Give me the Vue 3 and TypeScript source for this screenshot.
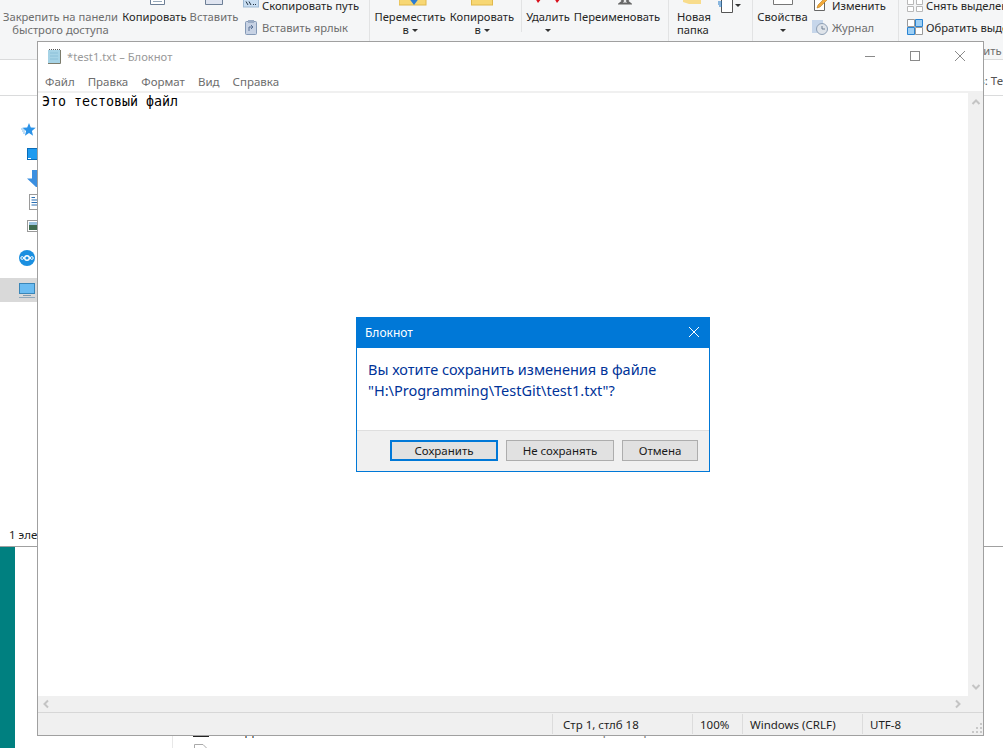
<script setup lang="ts">
const menu = ['Файл', 'Правка', 'Формат', 'Вид', 'Справка'];
const cells = [
  { text: 'Стр 1, стлб 18', width: 140 },
  { text: '100%', width: 50 },
  { text: 'Windows (CRLF)', width: 120 },
  { text: 'UTF-8', width: 121 },
];
</script>

<template>
  <div class="desktop">
    <div class="explorer">
      <div class="ribbon">
        <div class="group g1">
          <div class="big w-pin">
            <span class="ico"></span>
            <span>Закрепить на панели</span>
            <span>быстрого доступа</span>
          </div>
          <div class="big w-copy dark">
            <svg class="ico i-copy" width="17" height="9"><path d="M1.5 -3V4.5H15.5V-3" fill="#fff" stroke="#6d7f96"/><path d="M4 1.5H13" stroke="#9ab"/></svg>
            <span>Копировать</span>
          </div>
          <div class="big w-paste">
            <svg class="ico" width="20" height="9"><path d="M1.5 -3V4.5H18.5V-3" fill="#dfe4f0" stroke="#6d7f96"/></svg>
            <span>Вставить</span>
          </div>
          <div class="small-col first-small">
            <div class="small dark">
              <svg width="16" height="14"><rect x="0.5" y="1" width="15" height="8" fill="#c9def2" stroke="#9db9d4"/><path d="M3 3.5L5 7M6 3.5L8 7M10 6.5h1M12 6.5h1" stroke="#234" fill="none"/></svg>
              <span>Скопировать путь</span>
            </div>
            <div class="small">
              <svg width="16" height="16"><rect x="2.5" y="2.5" width="11" height="13" rx="1" fill="#c7d2e4" stroke="#8499b6"/><rect x="5" y="1" width="6" height="3" fill="#9aabc4"/><path d="M6 12V8H10M8 6l2 2-2 2" fill="none" stroke="#5b7396"/></svg>
              <span>Вставить ярлык</span>
            </div>
          </div>
        </div>

        <div class="group g2">
          <div class="big w-move dark">
            <svg class="ico i-move" width="28" height="9"><rect x="0" y="-4" width="27" height="9" fill="#f7d774" stroke="#e0b84c"/><path d="M9 -3H21L15 5Z" fill="#2b7cd3"/></svg>
            <span>Переместить</span>
            <span>в <i class="caret"></i></span>
          </div>
          <div class="big w-copyto dark">
            <svg class="ico" width="22" height="9"><rect x="0.5" y="-4" width="21" height="9" fill="#f7d774" stroke="#e0b84c"/></svg>
            <span>Копировать</span>
            <span>в <i class="caret"></i></span>
          </div>
          <div class="sep"></div>
          <div class="big w-del dark">
            <svg class="ico" width="30" height="9"><path d="M2 -2L5 3L9 -2ZM21 -2L24 3L28 -2Z" fill="#d8101c"/></svg>
            <span>Удалить</span>
            <span><i class="caret"></i></span>
          </div>
          <div class="big w-ren dark">
            <svg class="ico i-ren" width="14" height="9"><path d="M2 -2L5 1L2 3.5H12L9 1L12 -2" fill="none" stroke="#666" stroke-width="2"/></svg>
            <span>Переименовать</span>
          </div>
        </div>

        <div class="group g3 dark">
          <div class="big w-new">
            <svg class="ico i-new" width="22" height="9"><path d="M2 -3H20V4H8L2 2Z" fill="#f8dc8c"/></svg>
            <span>Новая</span>
            <span>папка</span>
          </div>
          <div class="new-item">
            <svg width="20" height="14"><path d="M7.5 -1V12.5H18.5V-1" fill="#fff" stroke="#555"/><path d="M4 2H8M4 4H8M5 6H8" stroke="#1e78c8"/></svg>
            <i class="caret"></i>
          </div>
        </div>

        <div class="group g4">
          <div class="big w-prop dark">
            <svg class="ico" width="22" height="9"><path d="M1.5 -3V4.5H20.5V-3" fill="#fff" stroke="#777"/></svg>
            <span>Свойства</span>
            <span><i class="caret"></i></span>
          </div>
          <div class="small-col">
            <div class="small dark">
              <svg width="17" height="14"><path d="M2.5 1V12.5H12.5V4" fill="#fff" stroke="#666"/><path d="M5 10L6 7L13 0L15 2L8 9Z" fill="#f2a93b" stroke="#b87a18" stroke-width="0.6"/></svg>
              <span>Изменить</span>
            </div>
            <div class="small">
              <svg width="17" height="16"><rect x="0" y="1" width="11" height="13" fill="#c6d6ea"/><circle cx="10" cy="10" r="5.5" fill="#dfe4ea" stroke="#8ea0b6"/><path d="M10 7V10H13" fill="none" stroke="#6f7f92"/></svg>
              <span>Журнал</span>
            </div>
          </div>
        </div>

        <div class="group g5">
          <div class="small-col">
            <div class="small dark">
              <svg width="16" height="14"><path d="M.5 1.5h6v5h-6zM9.5 1.5h6v5h-6zM.5 8.5h6v5h-6zM9.5 8.5h6v5h-6z" fill="#fff" stroke="#b8b8b8"/></svg>
              <span>Снять выделение</span>
            </div>
            <div class="small dark">
              <svg width="16" height="16"><path d="M.5 .5h7v7h-7zM8.5 8.5h7v7h-7z" fill="#fff" stroke="#9a9a9a"/><path d="M8.5 .5h7v7h-7zM.5 8.5h7v7h-7z" fill="#9fd0f5" stroke="#2a84d2"/></svg>
              <span>Обратить выделение</span>
            </div>
            <div class="caption">Выделить</div>
          </div>
        </div>
      </div>

      <div class="address">
        <svg class="back" width="14" height="12"><path d="M6 1L1.5 6L6 11M2 6H13" fill="none" stroke="#7c7c7c" stroke-width="2"/></svg>
        <span class="search">Поиск в: Тест</span>
      </div>

      <div class="nav">
        <div class="nav-row">
          <svg width="19" height="24"><path d="M10 5L11.8 9.6L16.7 9.8L12.9 13L14.1 17.7L10 15L5.9 17.7L7.1 13L3.3 9.8L8.2 9.6Z" fill="#2b93e8"/><path d="M2 11H5M3 13H6M4 15H6" stroke="#7cbcf0"/></svg>
        </div>
        <div class="nav-row">
          <svg width="19" height="24"><rect x="8.5" y="6.5" width="12" height="11" fill="#1e9bf0" stroke="#0a6cb8"/><path d="M9 16.5h3" stroke="#fff"/></svg>
        </div>
        <div class="nav-row">
          <svg width="19" height="24"><path d="M13 4H20V21H17L8 12.5H13Z" fill="#3b8fe0"/></svg>
        </div>
        <div class="nav-row">
          <svg width="19" height="24"><rect x="10.5" y="4.5" width="10" height="15" fill="#fff" stroke="#9a9a9a"/><path d="M12.5 7.5H16M12.5 10H20M12.5 12.5H20M12.5 15H20" stroke="#2a6fb3"/></svg>
        </div>
        <div class="nav-row">
          <svg width="19" height="24"><rect x="8.5" y="6.5" width="14" height="11" fill="#fff" stroke="#9a9a9a"/><rect x="10" y="8" width="10" height="3" fill="#9cc3df"/><rect x="10" y="11" width="10" height="5" fill="#3f6b4f"/></svg>
        </div>
        <div class="nav-row cloud">
          <svg width="19" height="24"><circle cx="8" cy="12" r="8" fill="#1a8fe0"/><circle cx="8" cy="12" r="2.3" fill="none" stroke="#fff" stroke-width="1.4"/><circle cx="3.2" cy="12" r="1.4" fill="none" stroke="#fff"/><circle cx="12.8" cy="12" r="1.4" fill="none" stroke="#fff"/></svg>
        </div>
        <div class="nav-row selected">
          <svg width="19" height="24"><rect x="0.5" y="5.5" width="15" height="10" fill="#6bbcf2" stroke="#3a86b8"/><path d="M4 17.5H12" stroke="#7f9bb0"/><path d="M0 19.5H16" stroke="#8fa8bc"/></svg>
        </div>
      </div>

      <div class="count">1 элемент</div>
    </div>

    <div class="lower">
      <div class="teal"></div>
      <div class="files">
        <div class="file-row">
          <svg width="16" height="14"><rect x="0.5" y="0.5" width="15" height="13" fill="#fff" stroke="#222"/><rect x="4" y="3" width="8" height="6" fill="#555"/></svg>
          <span class="file-name">startapp.bat</span>
          <span class="file-date">12.03.2020 14:36</span>
          <span class="file-type">файл скрипта</span>
          <span class="file-size">1 КБ</span>
        </div>
        <div class="file-row second">
          <svg width="16" height="14"><path d="M1.5 13.5V0.5H10L13.5 4V13.5" fill="#fff" stroke="#aaa"/></svg>
        </div>
      </div>
    </div>

    <div class="notepad">
      <div class="np-title">
        <svg width="16" height="16"><rect x="1" y="2" width="12" height="13" fill="#a6d3e6"/><path d="M13.5 2V15.5H1" fill="none" stroke="#7c7c6c"/><path d="M2 1.5H13" stroke="#555" stroke-dasharray="1 1"/><path d="M3 5H11M3 8H11M3 11H11" stroke="#8cc0d8"/></svg>
        <span class="np-name">*test1.txt – Блокнот</span>
        <div class="np-controls">
          <svg width="12" height="12"><path d="M1 6.5H11" stroke="#8a8a8a"/></svg>
          <svg width="12" height="12"><rect x="1.5" y="1.5" width="9" height="9" fill="none" stroke="#8a8a8a"/></svg>
          <svg width="12" height="12"><path d="M1 1L11 11M11 1L1 11" stroke="#8a8a8a"/></svg>
        </div>
      </div>
      <div class="np-menu">
        <span v-for="item in menu" :key="item">{{ item }}</span>
      </div>
      <div class="np-main">
        <div class="np-text">Это тестовый файл</div>
        <div class="vscroll">
          <svg width="10" height="8"><path d="M1.5 6L5 2.5L8.5 6" fill="none" stroke="#c4c4c4" stroke-width="2"/></svg>
          <svg width="10" height="8"><path d="M1.5 2L5 5.5L8.5 2" fill="none" stroke="#c4c4c4" stroke-width="2"/></svg>
        </div>
      </div>
      <div class="hscroll">
        <svg width="8" height="10"><path d="M6 1.5L2.5 5L6 8.5" fill="none" stroke="#c4c4c4" stroke-width="2"/></svg>
        <svg width="8" height="10"><path d="M2 1.5L5.5 5L2 8.5" fill="none" stroke="#c4c4c4" stroke-width="2"/></svg>
      </div>
      <div class="np-status">
        <div v-for="c in cells" :key="c.text" class="cell" :style="{ width: c.width + 'px' }">{{ c.text }}</div>
        <svg class="grip" width="10" height="10"><path d="M8 0h2v2H8zM4 4h2v2H4zM8 4h2v2H8zM0 8h2v2H0zM4 8h2v2H4zM8 8h2v2H8z" fill="#c8c8c8"/></svg>
      </div>
    </div>

    <div class="dialog">
      <div class="dlg-title">
        <span>Блокнот</span>
        <svg width="12" height="12"><path d="M1 1L11 11M11 1L1 11" stroke="#fff"/></svg>
      </div>
      <div class="dlg-body">
        <div>Вы хотите сохранить изменения в файле</div>
        <div>"H:\Programming\TestGit\test1.txt"?</div>
      </div>
      <div class="dlg-foot">
        <button class="btn primary">Сохранить</button>
        <button class="btn">Не сохранять</button>
        <button class="btn cancel">Отмена</button>
      </div>
    </div>
  </div>
</template>

<style scoped>
.desktop {
  position: relative;
  width: 1003px;
  height: 748px;
  overflow: hidden;
  background: #fff;
  font-family: "Noto Sans", sans-serif;
  font-size: 11.5px;
  color: #1e1e1e;
}

.explorer {
  height: 546px;
  border-bottom: 1px solid #a0a0a0;
  display: flex;
  flex-direction: column;
}

.ribbon {
  height: 59px;
  flex: none;
  display: flex;
  background: #f5f6f7;
  border-bottom: 1px solid #dadbdc;
  color: #6d6d6d;
  font-size: 11.2px;
  line-height: 13px;
}
.dark { color: #262626; }

.group {
  display: flex;
  height: 41px;
  flex: none;
  box-sizing: border-box;
  border-right: 1px solid #e2e3e4;
}
.g1 { width: 370px; }
.g2 { width: 299px; }
.g3 { width: 84px; }
.g4 { width: 146px; }
.g5 { border-right: 0; padding-left: 8px; }

.big {
  display: flex;
  flex-direction: column;
  align-items: center;
  flex: none;
  white-space: nowrap;
}
.ico { display: block; height: 9px; margin-bottom: 1px; flex: none; }
.i-copy { margin-left: 6px; }
.i-move { margin-left: 6px; }
.i-ren { margin-left: 16px; }
.i-new { margin-left: 4px; }
.w-pin { width: 121px; }
.w-copy { width: 67px; }
.w-paste { width: 52px; }
.w-move { width: 80px; }
.w-copyto { width: 64px; }
.w-del { width: 52px; }
.w-ren { width: 86px; }
.w-new { width: 45px; align-items: flex-start; padding-left: 8px; box-sizing: border-box; }
.w-prop { width: 59px; }

.caret {
  display: inline-block;
  border: 3px solid transparent;
  border-top: 3px solid #333;
  border-bottom: 0;
  vertical-align: 2px;
}
.sep {
  width: 1px;
  height: 32px;
  background: #e2e3e4;
  margin: 0 0 0 7px;
  flex: none;
}

.small-col {
  margin-top: -6px;
  display: flex;
  flex-direction: column;
  white-space: nowrap;
}
.first-small { margin-left: 3px; }
.small {
  height: 22px;
  flex: none;
  display: flex;
  align-items: center;
  gap: 3px;
}
.caption {
  flex: none;
  color: #6d6d6d;
  padding-left: 41px;
  margin-top: 5px;
  line-height: 16px;
}

.new-item {
  display: flex;
  align-items: flex-start;
  gap: 1px;
}
.new-item .caret { margin-top: 4px; }

.address {
  height: 35px;
  flex: none;
  display: flex;
  align-items: center;
  border-bottom: 1px solid #dadbdc;
  padding-left: 7px;
  white-space: nowrap;
}
.back { margin-top: 6px; }
.search {
  margin-left: 934px;
  margin-top: 5px;
  color: #555;
}

.nav { padding-top: 22px; width: 172px; }
.nav-row { height: 24px; padding-left: 19px; }
.nav-row svg { display: block; }
.nav-row.cloud { margin-top: 8px; }
.nav-row.selected { margin-top: 8px; background: #d9d9d9; }

.count {
  margin-top: auto;
  padding: 0 0 3px 9px;
  line-height: 16px;
  white-space: nowrap;
}

.lower {
  height: 201px;
  display: flex;
}
.teal { width: 15px; background: #008080; flex: none; }
.files {
  flex: 1;
  margin-left: 157px;
  padding: 175px 0 0 20px;
  border-left: 1px solid #e8e8e8;
}
.file-row {
  height: 16px;
  display: flex;
  align-items: center;
  white-space: nowrap;
}
.file-row.second { height: 14px; margin-top: 6px; }
.file-name { margin-left: 4px; width: 240px; }
.file-date { width: 147px; color: #6d6d6d; }
.file-type { width: 163px; color: #6d6d6d; }
.file-size { color: #6d6d6d; }

.notepad {
  position: absolute;
  left: 37px;
  top: 41px;
  width: 945px;
  height: 693px;
  border: 1px solid #a0a0a0;
  background: #fff;
  display: flex;
  flex-direction: column;
}
.np-title {
  height: 30px;
  box-sizing: border-box;
  padding-bottom: 2px;
  flex: none;
  display: flex;
  align-items: center;
  padding-left: 9px;
}
.np-name {
  margin-left: 4px;
  font-size: 11.2px;
  color: #999;
}
.np-controls {
  margin-left: auto;
  display: flex;
  gap: 33px;
  padding-right: 17px;
}
.np-controls svg { display: block; }
.np-menu {
  height: 19px;
  flex: none;
  display: flex;
  gap: 13px;
  padding-left: 7px;
  align-items: center;
  color: #6d6d6d;
  border-bottom: 2px solid #f0f0f0;
}
.np-main {
  flex: 1;
  display: flex;
  min-height: 0;
}
.np-text {
  flex: 1;
  padding: 1px 0 0 4px;
  font-family: "DejaVu Sans Mono", monospace;
  font-size: 13.3px;
  line-height: 16px;
  color: #000;
}
.vscroll {
  width: 15px;
  background: #f0f0f0;
  display: flex;
  flex-direction: column;
  justify-content: space-between;
  align-items: center;
  padding: 5px 0;
}
.vscroll svg, .hscroll svg { display: block; }
.hscroll {
  height: 16px;
  flex: none;
  background: #f0f0f0;
  display: flex;
  align-items: center;
  justify-content: space-between;
  padding: 0 21px 0 4px;
  border-bottom: 1px solid #d7d7d7;
}
.np-status {
  height: 22px;
  flex: none;
  background: #f0f0f0;
  display: flex;
  justify-content: flex-end;
  position: relative;
}
.cell {
  flex: none;
  box-sizing: border-box;
  padding-left: 7px;
  border-left: 1px solid #dcdcdc;
  line-height: 22px;
  height: 20px;
  margin-top: 1px;
  white-space: nowrap;
}
.cell:first-child { padding-left: 10px; }
.grip { position: absolute; right: 1px; bottom: 2px; }

.dialog {
  position: absolute;
  left: 356px;
  top: 317px;
  width: 352px;
  height: 153px;
  border: 1px solid #0078d7;
  background: #fff;
  display: flex;
  flex-direction: column;
}
.dlg-title {
  height: 30px;
  box-sizing: border-box;
  flex: none;
  background: #0078d7;
  color: #fff;
  display: flex;
  align-items: center;
  justify-content: space-between;
  padding: 0 9px 2px 8px;
  font-size: 12px;
}
.dlg-body {
  height: 82px;
  flex: none;
  box-sizing: border-box;
  padding: 11px 0 0 11px;
  font-size: 14.5px;
  line-height: 21px;
  color: #003399;
  white-space: nowrap;
}
.dlg-foot {
  flex: 1;
  background: #f0f0f0;
  border-top: 1px solid #dfdfdf;
  display: flex;
  justify-content: flex-end;
  gap: 8px;
  padding: 9px 11px 0 0;
}
.btn {
  width: 108px;
  height: 21px;
  box-sizing: border-box;
  padding: 0;
  border: 1px solid #adadad;
  background: #e1e1e1;
  font: inherit;
  font-size: 11.5px;
  color: #1a1a1a;
}
.btn.primary { border: 2px solid #0078d7; }
.btn.cancel { width: 76px; }
</style>
